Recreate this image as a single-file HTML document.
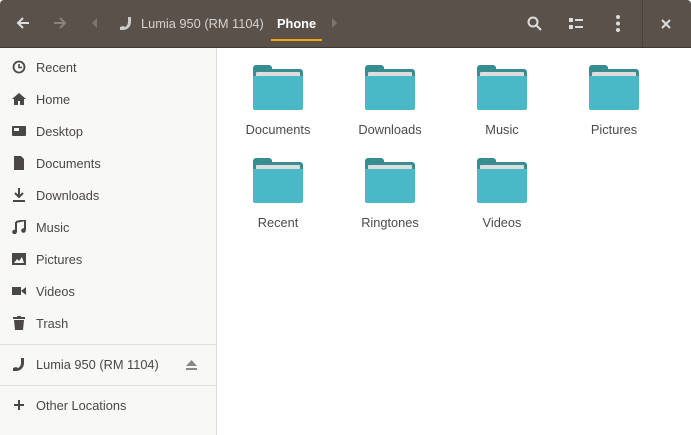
<!DOCTYPE html><html><head><style>
body{margin:0;width:691px;height:435px;overflow:hidden;font-family:"Liberation Sans",sans-serif;background:#fff;position:relative}
.hdr{position:absolute;left:0;top:0;width:691px;height:47px;background:#5a514b;border-radius:4px 4px 0 0;border-bottom:1px solid #3e3833}
.side{position:absolute;left:0;top:48px;width:216px;height:387px;background:#f8f8f7;border-right:1px solid #dcdcdc}
.it{position:absolute;left:36px;font-size:12.8px;color:#4a4744}
.ic{position:absolute;left:12px;width:14px;height:14px}
.sep{position:absolute;left:0;width:216px;height:1px;background:#dedede}
.f{position:absolute;width:112px;text-align:center;font-size:12.8px;color:#4d4a47}
.f svg{display:block;margin:0 auto 12px}
.t{position:absolute;color:#fff;font-size:12.8px}
</style></head><body>
<div class="hdr">
<svg style="position:absolute;left:16px;top:16px" width="14" height="14"><path d="M13 7H2M7 2L2 7l5 5" stroke="#ddd" stroke-width="2" fill="none"/></svg>
<svg style="position:absolute;left:53px;top:16px" width="14" height="14"><path d="M1 7h11M7 2l5 5-5 5" stroke="#8a827c" stroke-width="2" fill="none"/></svg>
<svg style="position:absolute;left:92px;top:18px" width="6" height="10"><path d="M5 0L0 5l5 5z" fill="#7d766f"/></svg>
<svg style="position:absolute;left:119px;top:16px" width="13" height="14"><path d="M9 1h3v5c0 5-4 8-8 8H1v-3l3-1 2 1c2-1 3-3 3-5z" fill="#ccc"/></svg>
<div class="t" style="left:141px;top:16px;color:#d6d2cf">Lumia 950 (RM 1104)</div>
<div class="t" style="left:277px;top:16px;font-weight:bold">Phone</div>
<div style="position:absolute;left:271px;top:39px;width:51px;height:2px;background:#f2a41c"></div>
<svg style="position:absolute;left:332px;top:18px" width="6" height="10"><path d="M0 0l5 5-5 5z" fill="#7d766f"/></svg>
<svg style="position:absolute;left:527px;top:16px" width="15" height="15"><circle cx="6" cy="6" r="4.5" stroke="#ddd" stroke-width="2" fill="none"/><path d="M9 9l5 5" stroke="#ddd" stroke-width="2"/></svg>
<svg style="position:absolute;left:569px;top:18px" width="14" height="11"><rect x="0" y="0" width="4" height="4" fill="#ddd"/><rect x="0" y="7" width="4" height="4" fill="#ddd"/><rect x="6" y="1" width="8" height="2" fill="#ddd"/><rect x="6" y="8" width="8" height="2" fill="#ddd"/></svg>
<svg style="position:absolute;left:615px;top:15px" width="6" height="17"><circle cx="3" cy="2" r="2" fill="#ddd"/><circle cx="3" cy="8.5" r="2" fill="#ddd"/><circle cx="3" cy="15" r="2" fill="#ddd"/></svg>
<div style="position:absolute;left:642px;top:0;width:1px;height:47px;background:#48413c"></div>
<svg style="position:absolute;left:661px;top:19px" width="10" height="10"><path d="M1 1l8 8M9 1l-8 8" stroke="#ddd" stroke-width="2"/></svg>
</div>
<div class="side">
<svg class="ic" style="top:12px" viewBox="0 0 14 14"><circle cx="7" cy="7" r="5.5" stroke="#4a4744" stroke-width="1.8" fill="none"/><path d="M7 4v3.5h3" stroke="#4a4744" stroke-width="1.6" fill="none"/></svg><div class="it" style="top:12px">Recent</div>
<svg class="ic" style="top:44px" viewBox="0 0 14 14"><path d="M7 1L0 7h2v6h4v-4h2v4h4V7h2z" fill="#4a4744"/></svg><div class="it" style="top:44px">Home</div>
<svg class="ic" style="top:76px" viewBox="0 0 14 14"><rect x="0" y="2" width="14" height="10" rx="1" fill="#4a4744"/><rect x="2" y="4" width="5" height="3" fill="#f8f8f7"/></svg><div class="it" style="top:76px">Desktop</div>
<svg class="ic" style="top:108px" viewBox="0 0 14 14"><path d="M2 0h7l3 3v11H2z" fill="#4a4744"/></svg><div class="it" style="top:108px">Documents</div>
<svg class="ic" style="top:140px" viewBox="0 0 14 14"><path d="M7 0v8M3 5l4 4 4-4M1 13h12" stroke="#4a4744" stroke-width="2" fill="none"/></svg><div class="it" style="top:140px">Downloads</div>
<svg class="ic" style="top:172px" viewBox="0 0 14 14"><path d="M4 2l9-2v10" stroke="#4a4744" stroke-width="2" fill="none"/><path d="M4 2v10" stroke="#4a4744" stroke-width="2"/><circle cx="2.5" cy="12" r="2.3" fill="#4a4744"/><circle cx="11.5" cy="10.5" r="2.3" fill="#4a4744"/></svg><div class="it" style="top:172px">Music</div>
<svg class="ic" style="top:204px" viewBox="0 0 14 14"><rect x="0" y="1" width="14" height="12" fill="#4a4744"/><path d="M2 11l3-4 2 2 3-4 2 6z" fill="#f8f8f7"/></svg><div class="it" style="top:204px">Pictures</div>
<svg class="ic" style="top:236px" viewBox="0 0 14 14"><rect x="0" y="3" width="9" height="8" fill="#4a4744"/><path d="M9 7l5-4v8z" fill="#4a4744"/></svg><div class="it" style="top:236px">Videos</div>
<svg class="ic" style="top:268px" viewBox="0 0 14 14"><rect x="1" y="1" width="12" height="2" fill="#4a4744"/><rect x="5" y="0" width="4" height="2" fill="#4a4744"/><path d="M2 4h10l-1 10H3z" fill="#4a4744"/></svg><div class="it" style="top:268px">Trash</div>
<div class="sep" style="top:296px"></div>
<svg class="ic" style="top:309px" viewBox="0 0 14 14"><path d="M9 1h3v5c0 5-4 8-8 8H1v-3l3-1 2 1c2-1 3-3 3-5z" fill="#4a4744"/></svg><div class="it" style="top:309px">Lumia 950 (RM 1104)</div>
<svg style="position:absolute;left:186px;top:312px" width="11" height="10"><path d="M5.5 0L11 6H0z" fill="#888"/><rect y="8" width="11" height="2" fill="#888"/></svg>
<div class="sep" style="top:337px"></div>
<svg class="ic" style="top:350px" viewBox="0 0 14 14"><path d="M7 2v10M2 7h10" stroke="#4a4744" stroke-width="2"/></svg><div class="it" style="top:350px">Other Locations</div>
</div>
<svg width="0" height="0" style="position:absolute"><defs><g id="fd"><path d="M0 3a3 3 0 0 1 3-3h13a3 3 0 0 1 3 3v1h28a3 3 0 0 1 3 3v10H0z" fill="#388d92"/><rect x="3" y="7" width="44" height="10" rx="1" fill="#ddd"/><path d="M0 11h50v32a2 2 0 0 1-2 2H2a2 2 0 0 1-2-2z" fill="#49b9c7"/></g></defs></svg>
<div class="f" style="left:222px;top:65px"><svg width="50" height="45"><use href="#fd"/></svg>Documents</div>
<div class="f" style="left:334px;top:65px"><svg width="50" height="45"><use href="#fd"/></svg>Downloads</div>
<div class="f" style="left:446px;top:65px"><svg width="50" height="45"><use href="#fd"/></svg>Music</div>
<div class="f" style="left:558px;top:65px"><svg width="50" height="45"><use href="#fd"/></svg>Pictures</div>
<div class="f" style="left:222px;top:158px"><svg width="50" height="45"><use href="#fd"/></svg>Recent</div>
<div class="f" style="left:334px;top:158px"><svg width="50" height="45"><use href="#fd"/></svg>Ringtones</div>
<div class="f" style="left:446px;top:158px"><svg width="50" height="45"><use href="#fd"/></svg>Videos</div>
</body></html>
